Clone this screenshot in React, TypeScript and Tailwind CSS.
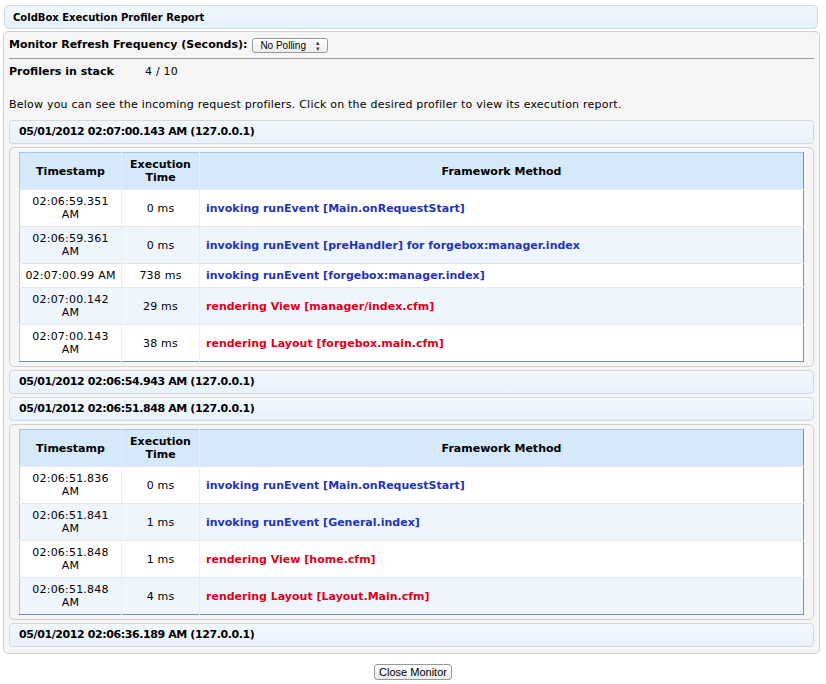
import React from "react";

type Row = { ts: string; time: string; method: string; kind: "invoke" | "render" };

const profilers: { label: string; open: boolean; rows: Row[] }[] = [
  {
    label: "05/01/2012 02:07:00.143 AM (127.0.0.1)",
    open: true,
    rows: [
      { ts: "02:06:59.351 AM", time: "0 ms", method: "invoking runEvent [Main.onRequestStart]", kind: "invoke" },
      { ts: "02:06:59.361 AM", time: "0 ms", method: "invoking runEvent [preHandler] for forgebox:manager.index", kind: "invoke" },
      { ts: "02:07:00.99 AM", time: "738 ms", method: "invoking runEvent [forgebox:manager.index]", kind: "invoke" },
      { ts: "02:07:00.142 AM", time: "29 ms", method: "rendering View [manager/index.cfm]", kind: "render" },
      { ts: "02:07:00.143 AM", time: "38 ms", method: "rendering Layout [forgebox.main.cfm]", kind: "render" },
    ],
  },
  { label: "05/01/2012 02:06:54.943 AM (127.0.0.1)", open: false, rows: [] },
  {
    label: "05/01/2012 02:06:51.848 AM (127.0.0.1)",
    open: true,
    rows: [
      { ts: "02:06:51.836 AM", time: "0 ms", method: "invoking runEvent [Main.onRequestStart]", kind: "invoke" },
      { ts: "02:06:51.841 AM", time: "1 ms", method: "invoking runEvent [General.index]", kind: "invoke" },
      { ts: "02:06:51.848 AM", time: "1 ms", method: "rendering View [home.cfm]", kind: "render" },
      { ts: "02:06:51.848 AM", time: "4 ms", method: "rendering Layout [Layout.Main.cfm]", kind: "render" },
    ],
  },
  { label: "05/01/2012 02:06:36.189 AM (127.0.0.1)", open: false, rows: [] },
];

function Header({ label }: { label: string }) {
  return (
    <div className="h-[24px] flex items-center pl-[9px] rounded-[4px] border border-[#d3d9df] bg-gradient-to-b from-[#f2f7fd] to-[#e8f2fc] text-[11px] font-bold tracking-[-0.4px] text-black">
      {label}
    </div>
  );
}

function ProfilerTable({ rows }: { rows: Row[] }) {
  return (
    <div className="rounded-[5px] border border-[#d0d0d0] bg-[#f5f5f5] px-[9px] py-[4px]">
      <table className="w-full border-collapse border border-t-[#a3c6ec] border-l-[#a3c6ec] border-r-[#7290b8] border-b-[#7290b8] text-[11px] leading-[13px]">
        <thead>
          <tr className="bg-[#d5e9fb] h-[37px]">
            <th className="w-[102px] border-r border-[#e6eef6] font-bold">Timestamp</th>
            <th className="w-[78px] border-r border-[#e6eef6] font-bold">
              Execution
              <br />
              Time
            </th>
            <th className="font-bold">Framework Method</th>
          </tr>
        </thead>
        <tbody>
          {rows.map((r, i) => (
            <tr key={i} className={`border-t border-[#e3e8ee] ${i % 2 === 0 ? "bg-white" : "bg-[#eef5fd]"}`}>
              <td className="border-r border-[#e6eef6] text-center px-[4px] py-[5px] tracking-[0.2px]">{r.ts}</td>
              <td className="border-r border-[#e6eef6] text-center tracking-[0.2px]">{r.time}</td>
              <td
                className={`px-[6px] font-bold ${r.kind === "invoke" ? "text-[#2234b4]" : "text-[#e0001b]"}`}
              >
                {r.method}
              </td>
            </tr>
          ))}
        </tbody>
      </table>
    </div>
  );
}

export default function App() {
  return (
    <div className="w-[826px] h-[684px] bg-white text-black font-['DejaVu_Sans',Verdana,sans-serif] text-[11px]">
      <div className="px-[3px] pt-[5px]">
        <div className="mx-[1px] mr-[5px] h-[24px] flex items-center pl-[8px] rounded-[5px] border border-[#d3d9df] bg-gradient-to-b from-[#f2f7fd] to-[#e6f1fc] text-[10px] font-bold">
          ColdBox Execution Profiler Report
        </div>
        <div className="mt-[2px] mr-[3px] rounded-[5px] border border-[#d0d0d0] bg-[#f5f5f5] px-[5px] pt-[6px] pb-[6px]">
          <div className="flex items-center h-[15px] font-bold text-[11px]">
            <span>Monitor Refresh Frequency (Seconds):</span>
            <span className="ml-[5px] h-[15px] w-[76px] flex items-center justify-between rounded-[3px] border border-[#9a9a9a] bg-gradient-to-b from-white to-[#ececec] px-[7px] text-[10px] font-normal font-['Liberation_Sans',Arial,sans-serif]">
              No Polling
              <span className="text-[7px] leading-[6px] flex flex-col items-center text-[#444]">
                <span>▴</span>
                <span>▾</span>
              </span>
            </span>
          </div>
          <div className="mt-[5px] border-t border-[#999]" />
          <div className="mt-[7px] flex h-[13px] items-center">
            <span className="w-[136px] font-bold">Profilers in stack</span>
            <span className="tracking-[0.2px]">4 / 10</span>
          </div>
          <div className="mt-[18px] h-[13px] tracking-[0.22px]">
            Below you can see the incoming request profilers. Click on the desired profiler to view its execution report.
          </div>
          <div className="mt-[10px] flex flex-col gap-[3px]">
            {profilers.map((p, i) => (
              <React.Fragment key={i}>
                <Header label={p.label} />
                {p.open && <ProfilerTable rows={p.rows} />}
              </React.Fragment>
            ))}
          </div>
        </div>
      </div>
      <div className="mt-[10px] flex justify-center">
        <button className="h-[16px] w-[78px] rounded-[3px] border border-[#9a9a9a] bg-gradient-to-b from-white to-[#ececec] text-[11px] leading-[14px] font-['Liberation_Sans',Arial,sans-serif]">
          Close Monitor
        </button>
      </div>
    </div>
  );
}
